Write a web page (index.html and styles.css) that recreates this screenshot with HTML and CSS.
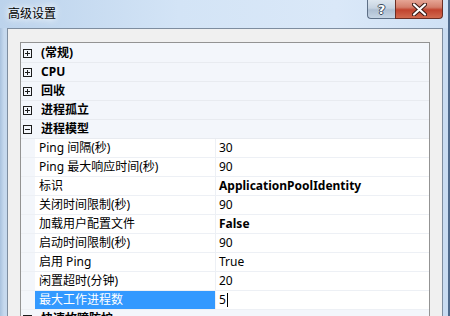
FILE: index.html
```html
<!DOCTYPE html>
<html lang="zh-CN">

<head>
    <meta charset="UTF-8">
    <meta name="viewport" content="width=device-width, initial-scale=1.0">
    <title>高级设置</title>
    <link rel="stylesheet" href="styles.css">
</head>

<body>
    <div class="window">
        <div class="titlebar">
            <div class="title">高级设置</div>
            <div class="caption-buttons">
                <div class="cap-btn help-btn">?</div>
                <div class="cap-btn close-btn">
                    <svg width="15" height="13" viewBox="0 0 15 13">
                        <path d="M2 1.5 L13 11.5 M13 1.5 L2 11.5" stroke="#3a1a14" stroke-width="4.2" stroke-linecap="round" fill="none" />
                        <path d="M2 1.5 L13 11.5 M13 1.5 L2 11.5" stroke="#ffffff" stroke-width="2.2" stroke-linecap="round" fill="none" />
                    </svg>
                </div>
            </div>
        </div>
        <div class="client">
            <div class="grid">
                <div class="row category">
                    <span class="expander plus"></span>
                    <span class="cat-label">(常规)</span>
                </div>
                <div class="row category">
                    <span class="expander plus"></span>
                    <span class="cat-label">CPU</span>
                </div>
                <div class="row category">
                    <span class="expander plus"></span>
                    <span class="cat-label">回收</span>
                </div>
                <div class="row category">
                    <span class="expander plus"></span>
                    <span class="cat-label">进程孤立</span>
                </div>
                <div class="row category">
                    <span class="expander"></span>
                    <span class="cat-label">进程模型</span>
                </div>
                <div class="row prop">
                    <div class="prop-margin"></div>
                    <div class="prop-name">Ping 间隔(秒)</div>
                    <div class="prop-value">30</div>
                </div>
                <div class="row prop">
                    <div class="prop-margin"></div>
                    <div class="prop-name">Ping 最大响应时间(秒)</div>
                    <div class="prop-value">90</div>
                </div>
                <div class="row prop">
                    <div class="prop-margin"></div>
                    <div class="prop-name">标识</div>
                    <div class="prop-value changed">ApplicationPoolIdentity</div>
                </div>
                <div class="row prop">
                    <div class="prop-margin"></div>
                    <div class="prop-name">关闭时间限制(秒)</div>
                    <div class="prop-value">90</div>
                </div>
                <div class="row prop">
                    <div class="prop-margin"></div>
                    <div class="prop-name">加载用户配置文件</div>
                    <div class="prop-value changed">False</div>
                </div>
                <div class="row prop">
                    <div class="prop-margin"></div>
                    <div class="prop-name">启动时间限制(秒)</div>
                    <div class="prop-value">90</div>
                </div>
                <div class="row prop">
                    <div class="prop-margin"></div>
                    <div class="prop-name">启用 Ping</div>
                    <div class="prop-value">True</div>
                </div>
                <div class="row prop">
                    <div class="prop-margin"></div>
                    <div class="prop-name">闲置超时(分钟)</div>
                    <div class="prop-value">20</div>
                </div>
                <div class="row prop selected">
                    <div class="prop-margin"></div>
                    <div class="prop-name">最大工作进程数</div>
                    <div class="prop-value">5<span class="caret"></span></div>
                </div>
                <div class="row category">
                    <span class="expander plus"></span>
                    <span class="cat-label">快速故障防护</span>
                </div>
            </div>
        </div>
    </div>
</body>

</html>
```

FILE: styles.css
```css
body {
    margin: 0;
    padding: 0;
    font-family: "Segoe UI", "Noto Sans", "Noto Sans CJK SC", sans-serif;
    font-size: 12px;
    color: #000;
    overflow: hidden;
}

.window {
    width: 450px;
    height: 316px;
    display: flex;
    flex-direction: column;
    box-sizing: border-box;
    overflow: hidden;
    background: linear-gradient(to right, #a9c2de 0px, #c6d9ee 4px, #cddff3 60%, #c9dcf2 100%);
    border-right: 2px solid #4f6a8c;
}

.titlebar {
    height: 28px;
    flex-shrink: 0;
    display: flex;
    justify-content: space-between;
    align-items: flex-start;
    background: linear-gradient(to right, #bcd3ec 0%, #d3e4f6 40%, #dae8f8 75%, #cfe1f5 100%);
}

.title {
    padding: 5px 0 0 8px;
    line-height: 18px;
    color: #000;
    text-shadow: 0 0 6px #fff, 0 0 10px #fff;
}

.caption-buttons {
    display: flex;
    margin-right: 5px;
}

.cap-btn {
    height: 19px;
    display: flex;
    justify-content: center;
    align-items: center;
    box-sizing: border-box;
    border: 1px solid #5d6f86;
    border-top: none;
}

.help-btn {
    width: 28px;
    border-radius: 0 0 0 4px;
    border-right: none;
    background: linear-gradient(to bottom, #dde6ef 0%, #c6d3e1 45%, #aebfd2 55%, #c5d4e4 100%);
    color: #fff;
    font-family: "DejaVu Sans", sans-serif;
    font-weight: bold;
    font-size: 13px;
    text-shadow: 1px 0 0 #3b4a5c, -1px 0 0 #3b4a5c, 0 1px 0 #3b4a5c, 0 -1px 0 #3b4a5c;
}

.close-btn {
    width: 48px;
    border-radius: 0 0 4px 0;
    border-color: #6b2e24;
    background: linear-gradient(to bottom, #e6a595 0%, #d47f6c 40%, #c1432e 55%, #d16a4f 100%);
}

.client {
    flex: 1;
    margin: 0 5px 0 7px;
    border: 1px solid #7e8d9f;
    border-bottom: none;
    background-color: #f0f0f0;
    padding: 13px 12px 0 12px;
}

.grid {
    height: 100%;
    border: 1px solid #939393;
    border-bottom: none;
    padding-top: 1px;
    background-color: #f3f6fb;
}

.row {
    height: 18px;
    display: flex;
    align-items: center;
    border-bottom: 1px solid #e8ebf0;
    white-space: nowrap;
}

.category {
    font-weight: bold;
}

.expander {
    width: 9px;
    height: 9px;
    box-sizing: border-box;
    border: 1px solid #1c1c1c;
    margin-left: 2px;
    margin-right: 9px;
    position: relative;
}

.expander::before {
    content: "";
    position: absolute;
    left: 1px;
    top: 3px;
    width: 5px;
    height: 1px;
    background-color: #1c1c1c;
}

.expander.plus::after {
    content: "";
    position: absolute;
    left: 3px;
    top: 1px;
    width: 1px;
    height: 5px;
    background-color: #1c1c1c;
}

.cat-label {
    line-height: 18px;
}

.prop {
    align-items: stretch;
    border-bottom-color: #edf0f5;
}

.prop-margin {
    width: 14px;
    flex-shrink: 0;
}

.prop-name {
    width: 181px;
    flex-shrink: 0;
    box-sizing: border-box;
    padding-left: 4px;
    line-height: 18px;
    background-color: #fff;
    border-right: 1px solid #edf0f5;
}

.prop-value {
    flex: 1;
    padding-left: 3px;
    line-height: 18px;
    background-color: #fff;
}

.prop-value.changed {
    font-weight: bold;
}

.selected .prop-name {
    background-color: #3399ff;
    color: #fff;
}

.caret {
    display: inline-block;
    width: 1px;
    height: 14px;
    margin-left: 1px;
    vertical-align: -3px;
    background-color: #000;
}
```
